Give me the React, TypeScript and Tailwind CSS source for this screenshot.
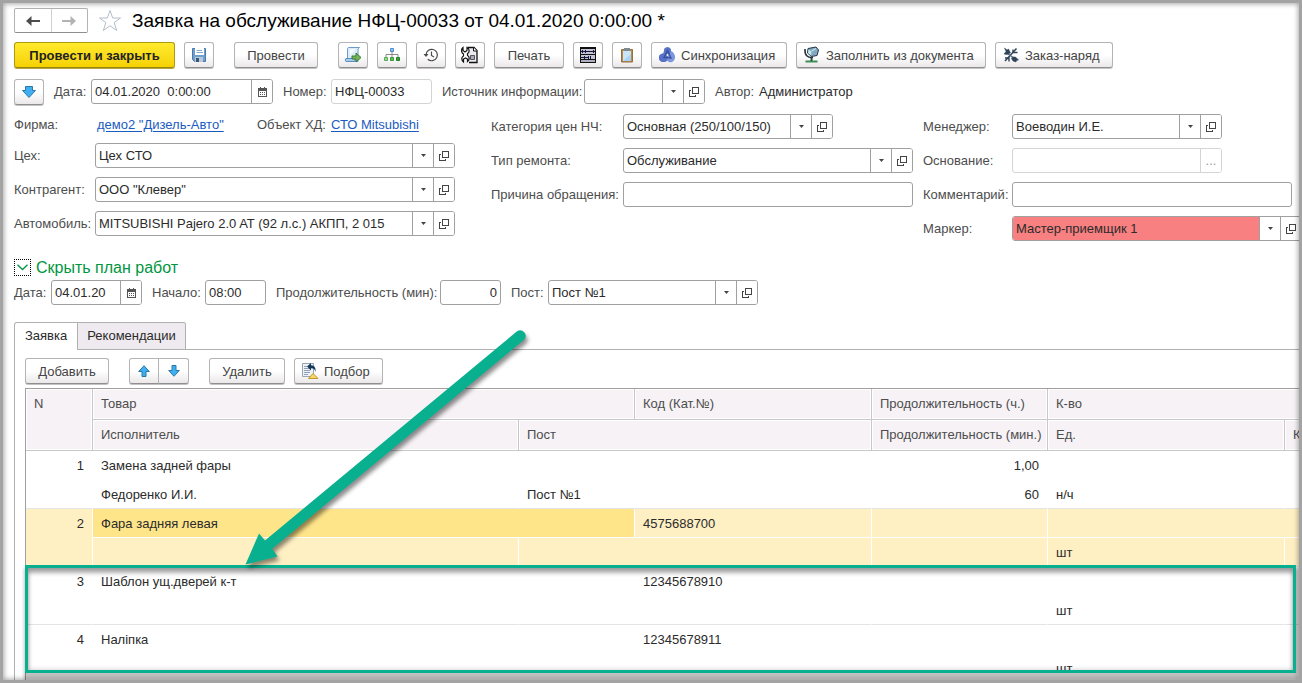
import { useState } from 'react'
import type { ReactNode } from 'react'
import clsx from 'clsx'

type Row = {
  n: number
  item: string
  code?: string
  hours?: string
  worker?: string
  post?: string
  minutes?: string
  unit: string
}

const ROWS: Row[] = [
  { n: 1, item: 'Замена задней фары', hours: '1,00', worker: 'Федоренко И.И.', post: 'Пост №1', minutes: '60', unit: 'н/ч' },
  { n: 2, item: 'Фара задняя левая', code: '4575688700', unit: 'шт' },
  { n: 3, item: 'Шаблон ущ.дверей к-т', code: '12345678910', unit: 'шт' },
  { n: 4, item: 'Наліпка', code: '12345678911', unit: 'шт' },
]

/* ---------- icons ---------- */

function ArrowIcon() {
  return (
    <svg width="16" height="16" viewBox="0 0 16 16">
      <path d="M4.500 2.500h7v4h3L8 13.500 1.500 6.500h3z" fill="#41aef0" stroke="#2878ab" strokeLinejoin="round" />
    </svg>
  )
}

function MoveIcon({ up }: { up?: boolean }) {
  return (
    <svg width="16" height="16" viewBox="0 0 16 16" className={clsx(up && 'rotate-180')}>
      <path d="M6 2.500h4v5h3.300L8 13.300 2.700 7.500H6z" fill="#41aef0" stroke="#2878ab" strokeLinejoin="round" />
    </svg>
  )
}

function NavArrow({ right }: { right?: boolean }) {
  return (
    <svg width="16" height="12" viewBox="0 0 16 12" className={clsx(right && 'rotate-180')}>
      <path d="M1 6 6.500 1v3.900H15v2.200H6.500V11z" fill={right ? '#b3b3b3' : '#4d4d4d'} />
    </svg>
  )
}

function StarIcon() {
  return (
    <svg width="24" height="24" viewBox="0 0 24 24">
      <path
        d="M12 1.500 14.700 9H22.500L16.200 13.600 18.600 21.500 12 16.700 5.400 21.500 7.800 13.600 1.500 9H9.300z"
        fill="#fff"
        stroke="#b4bcc8"
      />
    </svg>
  )
}

function SaveIcon() {
  return (
    <svg width="16" height="16" viewBox="0 0 16 16">
      <path d="M1.500 1.500h13v13h-11l-2-2z" fill="#6f9fcd" stroke="#4a78aa" />
      <path d="M4 1h9v7H4z" fill="#fff" />
      <path d="M5.500 3.500H11M5.500 5.500H12" stroke="#88a9c9" />
      <path d="M4 10h8v5H4z" fill="#b9c8d8" />
      <path d="M5 11h3v4H5z" fill="#3a5674" />
    </svg>
  )
}

function PostIcon() {
  return (
    <svg width="18" height="18" viewBox="0 0 18 18">
      <path d="M4.500 1.500h11c-1.500 1-1.500 2-1.500 3.500v10.500H2.500c-1.500 0-1.500-3 0-3h1V4c0-1.500 0-2 1-2.500z" fill="#dcecf9" stroke="#6d9bc9" />
      <path d="M2 12.500h9v3H2.500c-1.300 0-1.500-2-.5-3z" fill="#a9cbea" stroke="#5a8fc4" />
      <path d="M5.500 3.500 12 3l-6 6z" fill="#f6fbff" />
      <path d="M8 10h4V7l5 4.500-5 4.500v-3H8z" fill="#72b356" stroke="#3d7c35" />
    </svg>
  )
}

function TreeIcon() {
  return (
    <svg width="18" height="16" viewBox="0 0 18 16">
      <path d="M9 5v5M3 10V7.500h12V10" fill="none" stroke="#8a8a8a" />
      <path d="M7.500 1.500h3v3h-3z" fill="#8fc0f2" stroke="#4f8ccc" />
      <path d="M1.500 10.500h3v3h-3z" fill="#9bd78f" stroke="#5aa85a" />
      <path d="M7.500 10.500h3v3h-3z" fill="#5cc04e" stroke="#3c9a40" />
      <path d="M13.500 10.500h3v3h-3z" fill="#35a02c" stroke="#23802a" />
    </svg>
  )
}

function HistoryIcon() {
  return (
    <svg width="16" height="16" viewBox="0 0 16 16" fill="none" stroke="#4a4a4a">
      <path d="M3 8a5.700 5.700 0 1 1 1.800 4.200" strokeWidth="1.200" />
      <path d="M8.500 4.500V8.500l2.500 1.500" strokeWidth="1.200" />
      <path d="M.5 7h5L3 10z" fill="#4a4a4a" stroke="none" />
    </svg>
  )
}

function RepairDocIcon() {
  return (
    <svg width="18" height="18" viewBox="0 0 18 18">
      <path d="M6.500 1.500h6.500l3 3v12h-8" fill="#ececf0" stroke="#111" strokeWidth="1.300" />
      <path d="M12.500 1.500v3.500h3.500" fill="#fff" stroke="#111" />
      <path d="M9.500 9.500h4v4h-4z" fill="#aaa9bd" stroke="#555" />
      <path d="M2 1.500v3l2 1.500 2-1.500v-3c3 1.500 2.500 5 .5 6v2c2 1 2.500 4 0 6V13L4.500 12 2.500 13v3c-2.500-2-2-5 0-6V8C0 6.500 0 3 2 1.500z" fill="#fff" stroke="#111" strokeWidth="1.200" />
    </svg>
  )
}

function GridIcon() {
  return (
    <svg width="16" height="16" viewBox="0 0 16 16" shapeRendering="crispEdges">
      <path d="M0 0h16v16H0z" fill="#111" />
      <path d="M1 2h14v5H1zM1 8h14v4H1z" fill="#c3c3d4" />
      <path d="M1 13h14v2H1z" fill="#aeb0c2" />
      <path d="M1 4h14v1H1zM1 10h8v1H1zM2 3h1v3H2zM5 3h1v3H5zM13 3h1v3h-1zM4 9h1v3H4zM8 9h1v3H8zM10 9h1v3h-1z" fill="#16163c" />
    </svg>
  )
}

function ClipboardIcon() {
  return (
    <svg width="14" height="16" viewBox="0 0 14 16">
      <path d="M1.500 2.500h11v12.500h-11z" fill="#b98a4e" stroke="#97703c" />
      <path d="M3 4h8v10H3z" fill="#c8e5fa" />
      <path d="M4 1h6v3H4z" fill="#7f8a90" />
      <path d="M3 14 11 7v7z" fill="#a8d3f4" />
    </svg>
  )
}

function SyncIcon() {
  return (
    <svg width="18" height="18" viewBox="0 0 18 18">
      <path d="M6 4.500C6 0 13.500 0 13 5c4 1.500 5.500 7 2.500 10-2 2-5 1.500-6.500-.5-2.500 3-8.500 1.500-8-3C1 8.500 3.500 7.500 5.500 7.500z" fill="#7d95dc" />
      <path d="M6 4.500C6 0 13.500 0 13 5L9.500 11 9 14.500c-2.500 3-8.500 1.500-8-3C1 8.500 3.500 7.500 5.500 7.500z" fill="#5873c6" />
      <path d="M9.500 4.500 6 11.500l7 .5z" fill="none" stroke="#38509f" strokeWidth="1.300" />
      <path d="M9.500 8v2" stroke="#e3e9fb" strokeWidth="1.500" />
    </svg>
  )
}

function FillIcon() {
  return (
    <svg width="18" height="18" viewBox="0 0 18 18">
      <path d="M2.500 15.500h12" stroke="#3c8f52" strokeWidth="2" />
      <path d="M8.500 11.500v3.500" stroke="#225040" strokeWidth="2" />
      <path d="M2 3c-.5 6 2.500 9 8 8.500" fill="none" stroke="#26343d" strokeWidth="1.600" />
      <path d="M5 2.500 13 1l2.500 3-1.500 5.500-5.500 1L4.500 7z" fill="#7fa9c4" stroke="#26343d" />
      <path d="M5.500 3.500 8.500 5.500 8 9.500 5 7z" fill="#c9e8e4" />
      <path d="M8.500 5 13 2.500" stroke="#d7eef2" />
    </svg>
  )
}

function ToolsIcon() {
  return (
    <svg width="18" height="18" viewBox="0 0 18 18" fill="none" stroke="#2f4258">
      <path d="M14.500 2.500 3 15" strokeWidth="1.500" />
      <path d="M4 6.500 14 13.500" strokeWidth="1.500" stroke="#5c6f88" />
      <path d="M2.500 2 5 4l1.500-1 2 4-3.500 1.500-3-.5L4 5.500z" fill="#2f4258" strokeWidth=".5" />
      <path d="M10.500 11h3l3 3-2 .5-.5 1.500-3-1-1.500-2.500z" fill="#2f4258" strokeWidth=".5" />
      <path d="M10.500 6.500h5M11 3.500v3M3 12h4v3.500" strokeWidth="1.400" />
    </svg>
  )
}

function PickIcon() {
  return (
    <svg width="18" height="18" viewBox="0 0 18 18">
      <path d="M1.500 1.500h11v13h-11z" fill="#eef2f6" stroke="#98a5b3" />
      <path d="M3 4.500h3M3 6.500h5M3 8.500h6M3 10.500h6M3 12.500h4" stroke="#8fa2b8" />
      <path d="M6 4.500 10 1v2.200c4 .3 5 3.300 4.500 6.800-.5-2.500-1.500-3.800-4.500-3.800V8.500z" fill="#16375c" />
      <path d="M7.500 16.500 12 11.500l5 5z" fill="#f6d766" stroke="#c29a2b" />
    </svg>
  )
}

function CalendarIcon() {
  return (
    <svg width="9" height="10" viewBox="0 0 9 10" shapeRendering="crispEdges">
      <path d="M0 1h9v9H0zM1 4v5h7V4z" fill="#555" fillRule="evenodd" />
      <path d="M2 0h1v1H2zM6 0h1v1H6zM2 5h1v1H2zM4 5h1v1H4zM6 5h1v1H6zM2 7h1v1H2zM4 7h1v1H4zM6 7h1v1H6z" fill="#555" />
    </svg>
  )
}

function CaretIcon() {
  return (
    <svg width="5" height="3" viewBox="0 0 5 3">
      <path d="M0 0h5L2.500 3z" fill="#444" />
    </svg>
  )
}

function OpenIcon() {
  return (
    <svg width="10" height="10" viewBox="0 0 10 10" fill="none" stroke="#444" shapeRendering="crispEdges">
      <path d="M3.500.5h6v6h-6zM2 3.500H.5v6h6V8" />
    </svg>
  )
}

/* ---------- controls ---------- */

type ButtonProps = {
  className?: string
  label?: string
  icon?: ReactNode
  primary?: boolean
  children?: ReactNode
}

function Button({ className, label, icon, primary, children }: ButtonProps) {
  return (
    <button
      type="button"
      aria-label={label}
      className={clsx(
        'flex h-[26px] shrink-0 items-center rounded-[3px] border bg-linear-to-b whitespace-nowrap',
        primary
          ? 'border-[#b09a10] border-b-[#98850c] from-[#ffea2c] to-[#f6d200] font-bold text-[#222] shadow-[0_1px_0_#b8a640]'
          : 'border-[#b4b4b4] border-b-[#8f8f8f] from-white from-50% to-[#ebe8ea] text-[#444] shadow-[0_1px_0_#c4c4c4]',
        icon && children ? 'gap-[5px] pl-[6px]' : 'justify-center',
        className,
      )}
    >
      {icon}
      {children && <span className="pt-[2px]">{children}</span>}
    </button>
  )
}

type FieldProps = {
  id: string
  label: string
  labelClass: string
  className: string
  value?: string
  inputClass?: string
  kind?: 'plain' | 'ref' | 'date' | 'dots'
  muted?: boolean
}

const SIDE = 'flex w-[21px] shrink-0 items-center justify-center border-l bg-white'

function Field({ id, label, labelClass, className, value, inputClass, kind = 'plain', muted }: FieldProps) {
  const line = muted ? 'border-[#d4d4d4]' : 'border-[#a0a0a0]'
  return (
    <div className="flex h-[25px] items-center">
      <label htmlFor={id} className={clsx('shrink-0 whitespace-nowrap text-[#4d4d4d]', labelClass)}>
        {label}
      </label>
      <div className={clsx('flex h-full overflow-hidden rounded-[3px] border bg-white', line, className)}>
        <input
          id={id}
          defaultValue={value}
          className={clsx('min-w-0 flex-1 px-[3px] text-[#2b2b2b] outline-none', inputClass)}
        />
        {kind === 'ref' && (
          <>
            <button type="button" aria-label={`${label} выбрать`} className={clsx(SIDE, line)}>
              <CaretIcon />
            </button>
            <button type="button" aria-label={`${label} открыть`} className={clsx(SIDE, line)}>
              <OpenIcon />
            </button>
          </>
        )}
        {kind === 'date' && (
          <button type="button" aria-label={`${label} календарь`} className={clsx(SIDE, line)}>
            <CalendarIcon />
          </button>
        )}
        {kind === 'dots' && (
          <button type="button" aria-label={`${label} выбрать`} className={clsx(SIDE, line, 'text-[#999]')}>
            ...
          </button>
        )}
      </div>
    </div>
  )
}

/* ---------- table ---------- */

const TH = 'h-[31px] border-b border-l border-[#c8c8c8] bg-[#f6f2f6] px-2 text-left font-normal whitespace-nowrap text-[#4d4d4d] shadow-[inset_0_0_0_1px_#fff]'

function ItemsTable() {
  const [current, setCurrent] = useState(2)

  return (
    <table className="w-full table-fixed border-separate border-spacing-0 border-t border-l border-[#a0a0a0]">
      <colgroup>
        <col className="w-[66px]" />
        <col className="w-[426px]" />
        <col className="w-[116px]" />
        <col className="w-[237px]" />
        <col className="w-[176px]" />
        <col className="w-[237px]" />
        <col className="w-[120px]" />
      </colgroup>
      <thead>
        <tr>
          <th rowSpan={2} className={clsx(TH, 'border-l-0 pt-[7px] align-top')}>N</th>
          <th colSpan={2} className={TH}>Товар</th>
          <th className={TH}>Код (Кат.№)</th>
          <th className={TH}>Продолжительность (ч.)</th>
          <th colSpan={2} className={TH}>К-во</th>
        </tr>
        <tr>
          <th className={TH}>Исполнитель</th>
          <th colSpan={2} className={TH}>Пост</th>
          <th className={TH}>Продолжительность (мин.)</th>
          <th className={TH}>Ед.</th>
          <th className={TH}>К</th>
        </tr>
      </thead>
      {ROWS.map((r) => {
        const on = r.n === current
        const cell = clsx('h-[29px] border-b border-l px-2 pt-[2px]', on ? 'border-l-white' : 'border-l-transparent')
        const fill = on && 'bg-[#fff0c4]'
        const top = clsx(cell, on ? 'border-b-white' : 'border-b-transparent')
        const bottom = clsx(cell, fill, 'border-b-[#e4e4e4]')
        return (
          <tbody key={r.n} onClick={() => setCurrent(r.n)} className="text-[#2b2b2b]">
            <tr>
              <td rowSpan={2} className={clsx('border-b border-b-[#e4e4e4] px-2 pt-[7px] text-right align-top', fill)}>{r.n}</td>
              <td colSpan={2} className={clsx(top, on && 'bg-[#ffe58a]')}>{r.item}</td>
              <td className={clsx(top, fill)}>{r.code}</td>
              <td className={clsx(top, fill, 'text-right')}>{r.hours}</td>
              <td colSpan={2} className={clsx(top, fill)} />
            </tr>
            <tr>
              <td className={bottom}>{r.worker}</td>
              <td colSpan={2} className={bottom}>{r.post}</td>
              <td className={clsx(bottom, 'text-right')}>{r.minutes}</td>
              <td className={bottom}>{r.unit}</td>
              <td className={bottom} />
            </tr>
          </tbody>
        )
      })}
    </table>
  )
}

/* ---------- page ---------- */

export default function App() {
  return (
    <div className="relative flex h-screen flex-col overflow-hidden border-3 border-[#a3a3a3] bg-white pt-[5px] pl-[11px] font-['Liberation_Sans',Arial,sans-serif] text-[13px] leading-4">
      {/* Title */}
      <header className="flex h-[25px] shrink-0 items-center">
        <div className="flex h-[25px] w-[74px] rounded-[2px] border border-[#b4b4b4] border-b-[#8f8f8f]">
          <button type="button" aria-label="Назад" className="flex flex-1 items-center justify-center">
            <NavArrow />
          </button>
          <button type="button" aria-label="Вперед" className="flex flex-1 items-center justify-center border-l border-[#d0d0d0]">
            <NavArrow right />
          </button>
        </div>
        <button type="button" aria-label="В избранное" className="ml-[10px]">
          <StarIcon />
        </button>
        <h1 className="ml-[10px] text-[19px] whitespace-nowrap text-black">
          Заявка на обслуживание НФЦ-00033 от 04.01.2020 0:00:00 *
        </h1>
      </header>

      {/* Command bar */}
      <div className="mt-[9px] flex shrink-0 gap-[9px]">
        <Button className="w-[161px]" primary>Провести и закрыть</Button>
        <Button className="w-[30px]" label="Записать" icon={<SaveIcon />} />
        <Button className="mx-[11px] w-[84px]">Провести</Button>
        <Button className="w-[30px]" label="Ввести на основании" icon={<PostIcon />} />
        <Button className="w-[30px]" label="Структура подчиненности" icon={<TreeIcon />} />
        <Button className="w-[30px]" label="История" icon={<HistoryIcon />} />
        <Button className="w-[30px]" label="Ремонт" icon={<RepairDocIcon />} />
        <Button className="w-[70px]">Печать</Button>
        <Button className="w-[30px]" label="Планировщик" icon={<GridIcon />} />
        <Button className="w-[30px]" label="Буфер обмена" icon={<ClipboardIcon />} />
        <Button className="w-[136px]" icon={<SyncIcon />}>Синхронизация</Button>
        <Button className="w-[190px]" icon={<FillIcon />}>Заполнить из документа</Button>
        <Button className="w-[118px]" icon={<ToolsIcon />}>Заказ-наряд</Button>
      </div>

      <div className="mt-[11px] flex shrink-0 gap-[10px]">
        <Button className="w-[30px]" label="Развернуть" icon={<ArrowIcon />} />
        <Field id="date" label="Дата:" labelClass="w-[37px]" className="w-[182px]" value="04.01.2020  0:00:00" inputClass="whitespace-pre" kind="date" />
        <Field id="number" label="Номер:" labelClass="w-[48px]" className="w-[101px]" value="НФЦ-00033" muted />
        <Field id="source" label="Источник информации:" labelClass="w-[142px]" className="w-[121px]" kind="ref" />
        <div className="flex h-[25px] items-center text-[#4d4d4d]">
          <span className="w-[44px]">Автор:</span>
          <span className="text-[#2b2b2b]">Администратор</span>
        </div>
      </div>

      {/* Requisites */}
      <div className="mt-[9px] flex shrink-0 items-start">
        <div className="mr-9 flex flex-col gap-[9px]">
          <div className="flex h-5 items-center pt-[2px] whitespace-nowrap text-[#4d4d4d]">
            <span className="w-[83px]">Фирма:</span>
            <a href="#firm" className="w-[160px] text-[#1a5bc0] underline underline-offset-2">демо2 "Дизель-Авто"</a>
            <span className="w-[74px]">Объект ХД:</span>
            <a href="#object" className="text-[#1a5bc0] underline underline-offset-2">СТО Mitsubishi</a>
          </div>
          <Field id="shop" label="Цех:" labelClass="w-[81px]" className="w-[360px]" value="Цех СТО" kind="ref" />
          <Field id="partner" label="Контрагент:" labelClass="w-[81px]" className="w-[360px]" value='ООО "Клевер"' kind="ref" />
          <Field id="car" label="Автомобиль:" labelClass="w-[81px]" className="w-[360px]" value="MITSUBISHI Pajero 2.0 AT (92 л.с.) АКПП, 2 015" kind="ref" />
        </div>
        <div className="mr-[10px] flex flex-col gap-[9px]">
          <Field id="price" label="Категория цен НЧ:" labelClass="w-[132px]" className="w-[210px]" value="Основная (250/100/150)" kind="ref" />
          <Field id="repair" label="Тип ремонта:" labelClass="w-[132px]" className="w-[290px]" value="Обслуживание" kind="ref" />
          <Field id="reason" label="Причина обращения:" labelClass="w-[132px]" className="w-[290px]" />
        </div>
        <div className="flex flex-col gap-[9px]">
          <Field id="manager" label="Менеджер:" labelClass="w-[89px]" className="w-[210px]" value="Воеводин И.Е." kind="ref" />
          <Field id="basis" label="Основание:" labelClass="w-[89px]" className="w-[210px]" kind="dots" muted />
          <Field id="comment" label="Комментарий:" labelClass="w-[89px]" className="w-[280px]" />
          <Field id="marker" label="Маркер:" labelClass="w-[89px]" className="w-[290px]" value="Мастер-приемщик 1" inputClass="bg-[#f88080]" kind="ref" />
        </div>
      </div>

      {/* Work plan */}
      <button type="button" aria-expanded="true" className="mt-[17px] flex h-[18px] shrink-0 items-center gap-[5px] self-start text-base text-[#009640]">
        <span className="flex size-[17px] items-center justify-center border border-dotted border-black">
          <svg width="11" height="7" viewBox="0 0 11 7" fill="none" stroke="#009640" strokeWidth="1.300">
            <path d="M.5.8 5.500 5.500 10.500.8" />
          </svg>
        </span>
        <span className="pt-[2px]">Скрыть план работ</span>
      </button>
      <div className="mt-1 flex shrink-0 gap-[10px]">
        <Field id="plan-date" label="Дата:" labelClass="w-[37px]" className="w-[91px]" value="04.01.20" kind="date" />
        <Field id="plan-start" label="Начало:" labelClass="w-[53px]" className="w-[61px]" value="08:00" />
        <Field id="plan-length" label="Продолжительность (мин):" labelClass="w-[164px]" className="w-[61px]" value="0" inputClass="text-right" />
        <Field id="plan-post" label="Пост:" labelClass="w-[37px]" className="w-[210px]" value="Пост №1" kind="ref" />
      </div>

      {/* Tabs */}
      <div role="tablist" className="z-1 mt-[17px] -mb-px flex h-7 shrink-0">
        <button type="button" role="tab" aria-selected="true" className="w-[64px] rounded-tl-[3px] border border-b-0 border-[#b0b0b0] bg-white pb-px text-[#2b2b2b]">
          Заявка
        </button>
        <button type="button" role="tab" aria-selected="false" className="-ml-px w-[109px] rounded-tr-[2px] border border-[#b0b0b0] bg-[#efeaef] text-[#2b2b2b]">
          Рекомендации
        </button>
      </div>
      <div role="tabpanel" className="min-h-0 flex-1 overflow-hidden border-t border-l border-[#b0b0b0] pt-2 pl-[10px]">
        <div className="mb-1 flex">
          <Button className="mr-5 w-[84px]">Добавить</Button>
          <Button className="w-[30px] rounded-r-none" label="Вверх" icon={<MoveIcon up />} />
          <Button className="mr-5 -ml-px w-[31px] rounded-l-none" label="Вниз" icon={<MoveIcon />} />
          <Button className="mr-[9px] w-[76px]">Удалить</Button>
          <Button className="w-[89px]" icon={<PickIcon />}>Подбор</Button>
        </div>
        <ItemsTable />
      </div>

      {/* Soft inner edge of the frame */}
      <div className="pointer-events-none absolute inset-0 z-10 shadow-[inset_0_0_5px_1px_rgba(0,0,0,0.35)]" />

      {/* Callout: highlighted rows and the arrow pointing at them */}
      <div className="pointer-events-none absolute top-[562px] right-[3px] bottom-[7px] left-[22px] z-20 border-3 border-[#08b090] shadow-[1px_5px_3px_2px_rgba(0,0,0,0.24),inset_0_5px_4px_rgba(0,0,0,0.32),inset_0_0_4px_1px_rgba(0,0,0,0.15)]" />
      <svg width="300" height="250" viewBox="240 325 300 250" className="pointer-events-none absolute top-[322px] left-[237px] z-20 drop-shadow-[2px_4px_2px_rgba(0,0,0,0.45)]">
        <path d="M245.500 564.500 259 533.500 265 540.500 517 331.300A5.500 5.500 0 0 1 524 339.700L272.300 548.700 277.500 556.500z" fill="#08b090" />
      </svg>
    </div>
  )
}
